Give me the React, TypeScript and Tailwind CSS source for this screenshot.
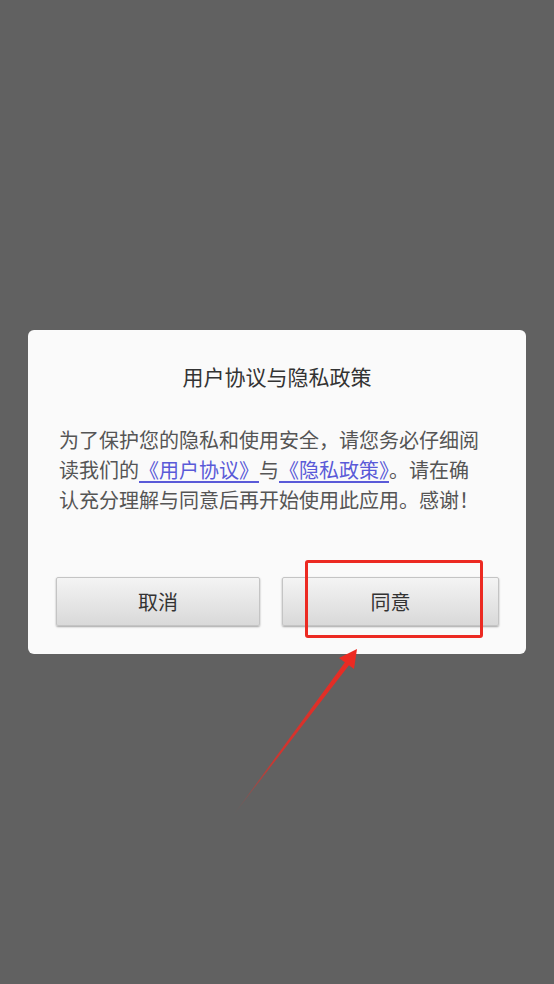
import React from "react";

const font = { fontFamily: '"Noto Sans CJK SC", "Noto Sans", sans-serif' };

const App = () => {
  return (
    <div
      className="relative w-full h-[984px] bg-[#616161] flex items-center justify-center overflow-hidden"
      style={font}
    >
      {/* Dialog */}
      <div className="w-[498px] bg-[#fafafa] rounded-[6px] flex flex-col">
        <h1 className="pt-[31px] text-center text-[21px] leading-[30px] text-[#333333]">
          用户协议与隐私政策
        </h1>
        <p className="mt-[34px] ml-[31px] w-[422px] text-[20px] leading-[30px] text-[#555555]">
          为了保护您的隐私和使用安全，请您务必仔细阅读我们的
          <span className="text-[#5a5ad8] underline underline-offset-[3px]">《用户协议》</span>
          与
          <span className="text-[#5a5ad8] underline underline-offset-[3px]">《隐私政策》</span>
          。请在确认充分理解与同意后再开始使用此应用。感谢！
        </p>
        <div className="mt-[62px] mb-[28px] ml-[28px] mr-[27px] flex gap-[22px]">
          <button className="w-[204px] h-[49px] rounded-[2px] border border-[#c4c4c4] bg-gradient-to-b from-[#f4f4f4] to-[#d9d9d9] shadow-[0_1px_2px_rgba(0,0,0,0.35)] text-[20px] text-[#333333]">
            取消
          </button>
          <button className="flex-1 h-[49px] rounded-[2px] border border-[#c4c4c4] bg-gradient-to-b from-[#f4f4f4] to-[#d9d9d9] shadow-[0_1px_2px_rgba(0,0,0,0.35)] text-[20px] text-[#333333]">
            同意
          </button>
        </div>
      </div>

      {/* Annotation: red highlight box */}
      <div className="absolute left-[305px] top-[560px] w-[178px] h-[78px] border-[3px] border-[#ec2a22] rounded-[3px]" />

      {/* Annotation: arrow */}
      <svg
        className="absolute left-0 top-0 pointer-events-none"
        width="554"
        height="984"
        viewBox="0 0 554 984"
      >
        <defs>
          <linearGradient id="arrowFade" x1="232" y1="817" x2="357" y2="649" gradientUnits="userSpaceOnUse">
            <stop offset="0" stopColor="#ec2a22" stopOpacity="0" />
            <stop offset="0.35" stopColor="#ec2a22" stopOpacity="0.8" />
            <stop offset="1" stopColor="#ec2a22" stopOpacity="1" />
          </linearGradient>
        </defs>
        <polygon points="232,817 345.5,661.5 349.5,664.5" fill="url(#arrowFade)" />
        <polygon points="357,649 354,669 339,658" fill="#ec2a22" />
      </svg>
    </div>
  );
};

export default App;
